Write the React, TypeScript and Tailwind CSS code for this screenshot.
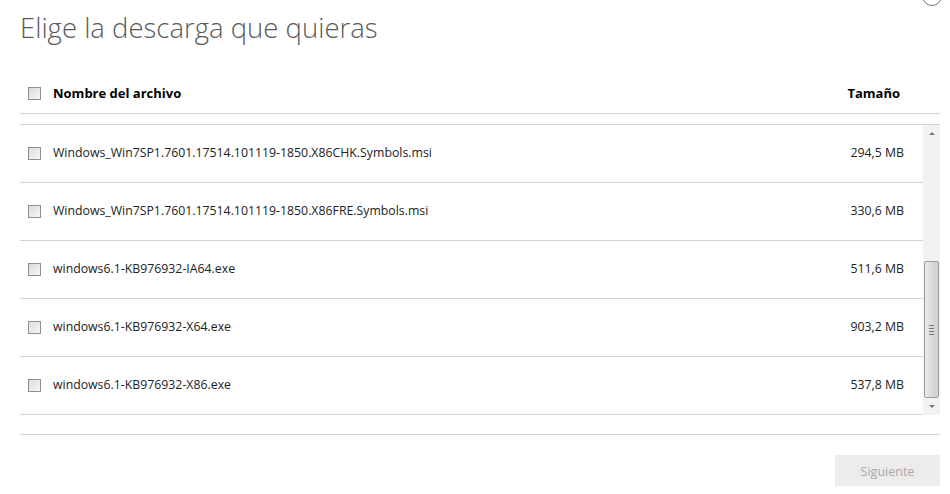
import React from 'react';

const files = [
  { name: 'Windows_Win7SP1.7601.17514.101119-1850.X86CHK.Symbols.msi', size: '294,5 MB' },
  { name: 'Windows_Win7SP1.7601.17514.101119-1850.X86FRE.Symbols.msi', size: '330,6 MB' },
  { name: 'windows6.1-KB976932-IA64.exe', size: '511,6 MB' },
  { name: 'windows6.1-KB976932-X64.exe', size: '903,2 MB' },
  { name: 'windows6.1-KB976932-X86.exe', size: '537,8 MB' },
];

function Box() {
  return (
    <span className="block w-[13px] h-[13px] border border-[#8f8f8f] bg-gradient-to-br from-[#dcdcdc] to-[#f7f7f7] shrink-0" />
  );
}

export default function App() {
  return (
    <div className="relative w-[950px] h-[494px] bg-white overflow-hidden font-['Open_Sans','Liberation_Sans',sans-serif]">
      {/* boton cerrar, casi fuera de la vista */}
      <div className="absolute right-[8px] top-[-14px] w-[20px] h-[20px] rounded-full border border-[#777]" />

      <div className="pl-[20px] pr-[10px]">
        <h1 className="pt-[8px] text-[27.5px] font-light text-[#5a5a5a] leading-[40px]">
          Elige la descarga que quieras
        </h1>

        {/* cabecera */}
        <div className="mt-[26px] flex items-center h-[40px] border-b border-[#d4d4d4] pl-[8px]">
          <Box />
          <span className="ml-[12px] text-[13px] font-bold text-black">Nombre del archivo</span>
          <span className="ml-auto mr-[40px] text-[13px] font-bold text-black">Tamaño</span>
        </div>

        <div className="mt-[10px] flex border-t border-[#d4d4d4] h-[291px]">
          <div className="flex-1 flex flex-col">
            {files.map((f) => (
              <div key={f.name} className="flex items-center h-[58px] border-b border-[#d4d4d4] pl-[8px] shrink-0">
                <Box />
                <span className="ml-[12px] text-[12.3px] text-[#222]">{f.name}</span>
                <span className="ml-auto mr-[19px] text-[12.3px] text-[#222]">{f.size}</span>
              </div>
            ))}
          </div>

          {/* barra de desplazamiento */}
          <div className="w-[17px] bg-[#f2f2f2] flex flex-col items-center">
            <div className="h-[16px] flex items-center justify-center">
              <span className="w-0 h-0 border-l-[3px] border-r-[3px] border-b-[3px] border-l-transparent border-r-transparent border-b-[#777]" />
            </div>
            <div className="mt-[120px] w-[15px] h-[137px] rounded-[2px] border border-[#9a9a9a] bg-gradient-to-r from-[#eaeaea] via-[#dcdcdc] to-[#cfcfcf] flex flex-col items-center justify-center gap-[2px]">
              <span className="block w-[5px] h-px bg-[#777]" />
              <span className="block w-[5px] h-px bg-[#777]" />
              <span className="block w-[5px] h-px bg-[#777]" />
              <span className="block w-[5px] h-px bg-[#777]" />
            </div>
            <div className="flex-1 flex items-center justify-center">
              <span className="w-0 h-0 border-l-[3px] border-r-[3px] border-t-[3px] border-l-transparent border-r-transparent border-t-[#777]" />
            </div>
          </div>
        </div>

        <div className="mt-[19px] border-t border-[#d4d4d4]" />

        <div className="flex justify-end mt-[20px]">
          <button className="w-[105px] h-[31px] pt-[3px] bg-[#ececec] text-[#a8a8a8] text-[12.5px]">Siguiente</button>
        </div>
      </div>
    </div>
  );
}
